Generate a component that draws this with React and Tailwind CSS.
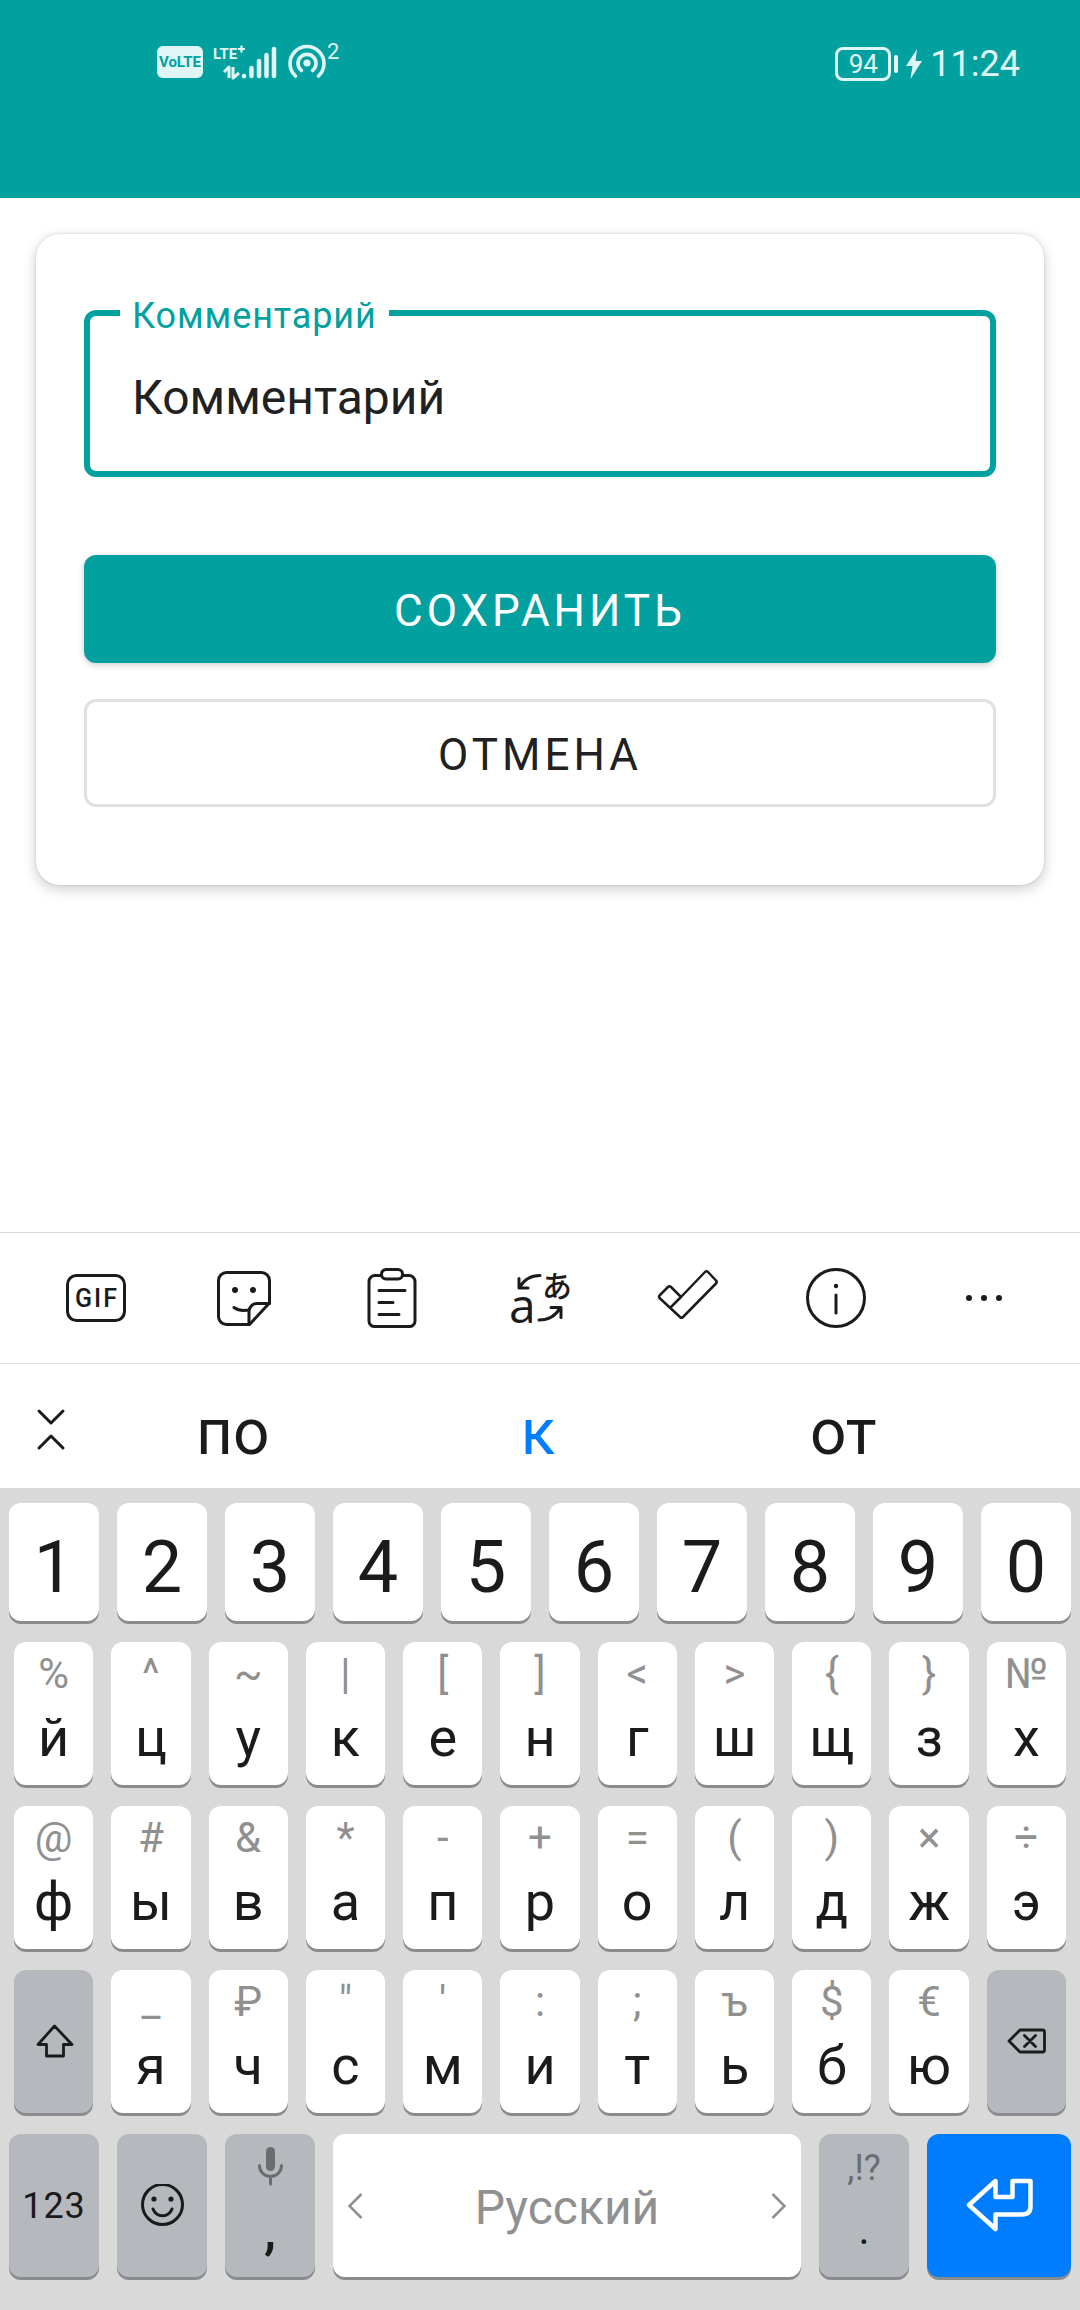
import React, { useState } from "react";

function StatusBar() {
  return (
    <header className="flex items-start justify-between bg-[#02a19f] pt-11 pr-[60px] pb-[114px] pl-[157px] text-[#e0f6f5]">
      <div className="flex h-10 items-start">
        <div className="mt-[2px] flex h-8 w-[46px] items-center justify-center rounded-md bg-[#e0f6f5] font-['Liberation_Sans_Narrow','Roboto',sans-serif] text-[15px] leading-none font-bold text-[#02a19f]">
          VoLTE
        </div>
        <svg className="ml-2 h-10 w-[68px]" viewBox="0 0 68 40" fill="none" aria-label="LTE+ signal">
          <text x="2" y="15" fill="currentColor" className="font-['Liberation_Sans_Narrow','Roboto',sans-serif] text-[15px] font-bold">LTE</text>
          <path d="M27 5h7M30.500 1.500v7" stroke="currentColor" strokeWidth="2.200" />
          <path d="M13 28l5-5v11M22 23v11l6-5" stroke="currentColor" strokeWidth="3" strokeLinejoin="round" />
          <path d="M33 32v.2M40.500 24v8M48 17v15M55.500 11v21M63 5v27" stroke="currentColor" strokeWidth="4.500" strokeLinecap="round" />
        </svg>
        <svg className="ml-2 h-10 w-10" viewBox="0 0 40 40" fill="none" stroke="currentColor" strokeWidth="3.600" strokeLinecap="round" aria-label="Hotspot">
          <circle cx="20" cy="19" r="3.600" fill="currentColor" stroke="none" />
          <path d="M14.500 26.500a9 9 0 1 1 11 0" />
          <path d="M8.500 32a17 17 0 1 1 23 0" />
        </svg>
        <span className="text-[22px] leading-4">2</span>
      </div>
      <div className="flex h-10 items-center">
        <div className="flex h-[34px] w-[56px] items-center justify-center rounded-lg border-[3px] border-[#e0f6f5] text-[26px] leading-none">94</div>
        <div className="ml-[3px] h-[18px] w-1 rounded-sm bg-[#e0f6f5]" />
        <svg className="ml-2 h-8 w-4" viewBox="0 0 16 32" fill="currentColor" aria-hidden="true">
          <path d="M11 1 0 18h6.500L4.500 31 16 13H9.500z" />
        </svg>
        <span className="ml-2 text-4xl leading-none">11:24</span>
      </div>
    </header>
  );
}

function CommentForm() {
  const [value, setValue] = useState("Комментарий");
  return (
    <form
      onSubmit={(e) => e.preventDefault()}
      className="mx-9 mt-9 flex flex-col rounded-3xl bg-white px-12 pt-[76px] pb-[78px] shadow-[0_4px_14px_rgba(0,0,0,0.2),0_0_3px_rgba(0,0,0,0.14)]"
    >
      <div className="relative">
        <label htmlFor="comment" className="absolute -top-4 left-9 bg-white px-3 text-4xl leading-[44px] tracking-wide text-[#02a19f]">
          Комментарий
        </label>
        <input
          id="comment"
          type="text"
          value={value}
          onChange={(e) => setValue(e.target.value)}
          className="h-[167px] w-full rounded-xl border-[6px] border-[#02a19f] bg-transparent px-[42px] pt-2 text-5xl text-[#212121] outline-none"
        />
      </div>
      <button type="submit" className="mt-[78px] h-[108px] rounded-xl bg-[#02a19f] pt-1 text-[44px] tracking-[4px] text-white shadow-[0_2px_6px_rgba(0,0,0,0.2)]">
        СОХРАНИТЬ
      </button>
      <button type="button" className="mt-9 h-[108px] rounded-xl border-[3px] border-[#e0e0e0] bg-white pt-1 text-[44px] tracking-[4px] text-[#212121]">
        ОТМЕНА
      </button>
    </form>
  );
}

const iconProps = {
  className: "size-[66px] overflow-visible",
  viewBox: "0 0 66 66",
  fill: "none",
  stroke: "currentColor",
  strokeWidth: 3,
  strokeLinecap: "round",
  strokeLinejoin: "round",
  "aria-hidden": true,
};

const tools = [
  {
    label: "GIF",
    icon: (
      <svg {...iconProps}>
        <rect x="4.500" y="10.500" width="57" height="45" rx="9" />
        <text x="34" y="42" textAnchor="middle" fill="currentColor" stroke="none" className="text-[25px] font-medium tracking-[2px]">GIF</text>
      </svg>
    ),
  },
  {
    label: "Стикеры",
    icon: (
      <svg {...iconProps}>
        <path d="M15.500 7.500h35a8 8 0 0 1 8 8V38L38.500 59.500h-23a8 8 0 0 1-8-8v-36a8 8 0 0 1 8-8Z" />
        <path d="M58.500 38.500H46a8 8 0 0 0-8 8v12.500M23 42.500c4 3 9 3.500 15 2.500" />
        <circle cx="24" cy="25" r="3" fill="currentColor" stroke="none" />
        <circle cx="42" cy="25" r="3" fill="currentColor" stroke="none" />
      </svg>
    ),
  },
  {
    label: "Буфер обмена",
    icon: (
      <svg {...iconProps}>
        <path d="M22 10.500h-6a6 6 0 0 0-6 6v39.500a5.500 5.500 0 0 0 6 5.500h34a5.500 5.500 0 0 0 6-5.500V16.500a6 6 0 0 0-6-6h-6" />
        <rect x="22.500" y="4.500" width="21" height="9.500" rx="4.500" />
        <path d="M20 25.500h26M20 37.500h14M20 49.500h20" />
      </svg>
    ),
  },
  {
    label: "Перевод",
    icon: (
      <svg {...iconProps}>
        <text x="2" y="58" fill="currentColor" stroke="none" className="font-['Open_Sans',sans-serif] text-[48px]">a</text>
        <text x="35" y="32" fill="currentColor" stroke="none" className="font-['Noto_Sans_CJK_JP',sans-serif] text-[30px] font-medium">あ</text>
        <path d="M33 10.500c-9 0-16 4-20.500 12M12 13.500v9.500h9M32 55c8 0 16-3 21-12M44 42.500h10v10" />
      </svg>
    ),
  },
  {
    label: "Проверка",
    icon: (
      <svg {...iconProps} strokeWidth="2.500">
        <path d="M4.500 30.500 13 22q1.500-1.500 3 0l10 10L50 7q1.500-1.500 3 0l8 8.500q1.500 1.500 0 3L28 52q-1.500 1.500-3 0L4.500 33q-1-1.200 0-2.500ZM26 32 15.500 42.500" />
      </svg>
    ),
  },
  {
    label: "Информация",
    icon: (
      <svg {...iconProps}>
        <circle cx="33" cy="33" r="28.500" />
        <path d="M33 30v18" />
        <circle cx="33" cy="21" r="2.200" fill="currentColor" stroke="none" />
      </svg>
    ),
  },
  {
    label: "Ещё",
    icon: (
      <svg {...iconProps} stroke="none" fill="currentColor">
        <circle cx="18" cy="33" r="3" />
        <circle cx="33" cy="33" r="3" />
        <circle cx="48" cy="33" r="3" />
      </svg>
    ),
  },
];

const numbers = ["1", "2", "3", "4", "5", "6", "7", "8", "9", "0"];

const rowOne = [["%", "й"], ["^", "ц"], ["~", "у"], ["|", "к"], ["[", "е"], ["]", "н"], ["<", "г"], [">", "ш"], ["{", "щ"], ["}", "з"], ["№", "х"]];
const rowTwo = [["@", "ф"], ["#", "ы"], ["&", "в"], ["*", "а"], ["-", "п"], ["+", "р"], ["=", "о"], ["(", "л"], [")", "д"], ["×", "ж"], ["÷", "э"]];
const rowThree = [["_", "я"], ["₽", "ч"], ['"', "с"], ["'", "м"], [":", "и"], [";", "т"], ["ъ", "ь"], ["$", "б"], ["€", "ю"]];

const keyBase = "rounded-xl shadow-[0_3px_0_#8a8b8f]";

function LetterKey({ symbol, letter }) {
  return (
    <button type="button" className={`${keyBase} flex h-[143px] flex-col items-center bg-white`}>
      <span className="text-[42px] leading-[64px] text-[#909090]">{symbol}</span>
      <span className="text-[54px] leading-[64px]">{letter}</span>
    </button>
  );
}

function GreyKey({ label, children }) {
  return (
    <button type="button" aria-label={label} className={`${keyBase} flex h-[143px] flex-col items-center justify-center bg-[#b5b8bd]`}>
      {children}
    </button>
  );
}

function Keyboard() {
  return (
    <section className="mt-auto text-[#1b1b1b]" aria-label="Клавиатура">
      <div className="grid grid-cols-7 border-y border-t-[#d9d9d9] border-b-[#e4e4e4] px-[22px] py-8">
        {tools.map((tool) => (
          <button key={tool.label} type="button" aria-label={tool.label} className="flex items-center justify-center">
            {tool.icon}
          </button>
        ))}
      </div>

      <div className="flex h-[124px] items-center pt-[6px] pr-[84px]">
        <button type="button" aria-label="Свернуть" className="flex w-20 justify-center pl-[22px]">
          <svg className="h-11 w-8" viewBox="0 0 32 44" fill="none" stroke="currentColor" strokeWidth="3" strokeLinecap="round" strokeLinejoin="round">
            <path d="m4 4 12 12L28 4M4 41l12-12 12 12" />
          </svg>
        </button>
        <div className="grid flex-1 grid-cols-3 text-[64px] leading-[84px]">
          <button type="button" className="pt-2">по</button>
          <button type="button" className="pt-2 text-[#007dff]">к</button>
          <button type="button" className="pt-2">от</button>
        </div>
      </div>

      <div className="flex flex-col gap-[21px] bg-[#d9d9d9] pt-[15px] pb-[33px]">
        <div className="grid grid-cols-10 gap-[18px] px-[9px]">
          {numbers.map((n) => (
            <button key={n} type="button" className={`${keyBase} h-[118px] bg-white pt-3 text-7xl leading-[106px]`}>
              {n}
            </button>
          ))}
        </div>
        <div className="grid grid-cols-11 gap-[18px] px-[14px]">
          {rowOne.map(([s, l]) => <LetterKey key={l} symbol={s} letter={l} />)}
        </div>
        <div className="grid grid-cols-11 gap-[18px] px-[14px]">
          {rowTwo.map(([s, l]) => <LetterKey key={l} symbol={s} letter={l} />)}
        </div>
        <div className="grid grid-cols-11 gap-[18px] px-[14px]">
          <GreyKey label="Shift">
            <svg className="h-9 w-10" viewBox="0 0 40 36" fill="none" stroke="currentColor" strokeWidth="2.800" strokeLinejoin="round">
              <path d="M20.500 2 4 20.500H12.500V32h17V20.500h8.500z" />
            </svg>
          </GreyKey>
          {rowThree.map(([s, l]) => <LetterKey key={l} symbol={s} letter={l} />)}
          <GreyKey label="Удалить">
            <svg className="h-7 w-10" viewBox="0 0 40 28" fill="none" stroke="currentColor" strokeWidth="2.800" strokeLinecap="round" strokeLinejoin="round">
              <path d="M14 2H36.500q2 0 2 2v18q0 2-2 2H14L3 13zM18.500 7.500l11 11M29.500 7.500l-11 11" />
            </svg>
          </GreyKey>
        </div>
        <div className="grid grid-cols-[5fr_5fr_5fr_26fr_5fr_8fr] gap-[18px] px-[9px]">
          <GreyKey>
            <span className="text-4xl tracking-wide">123</span>
          </GreyKey>
          <GreyKey label="Эмодзи">
            <svg className="size-11" viewBox="0 0 44 44" fill="none" stroke="currentColor" strokeWidth="3" strokeLinecap="round">
              <circle cx="22.500" cy="20.500" r="20" />
              <path d="M13 25c3.500 9 15.500 9 19 0" />
              <circle cx="14" cy="15" r="2.600" fill="currentColor" stroke="none" />
              <circle cx="31" cy="15" r="2.600" fill="currentColor" stroke="none" />
            </svg>
          </GreyKey>
          <GreyKey label="Запятая">
            <span className="flex h-16 items-center text-[#6b6c70]">
              <svg className="h-10 w-7" viewBox="0 0 28 40" fill="none" stroke="currentColor" strokeWidth="3" strokeLinecap="round">
                <rect x="10" y="1" width="9" height="24" rx="4.500" fill="currentColor" stroke="none" />
                <path d="M3.500 19.500c0 6 4.500 11 11 11s11-5 11-11M14.500 31v7" />
              </svg>
            </span>
            <span className="h-[79px] text-[54px] leading-[64px] font-medium">,</span>
          </GreyKey>
          <button type="button" className={`${keyBase} flex h-[143px] items-center justify-between bg-white px-[14px] text-5xl text-[#909090]`}>
            <svg className="h-7 w-4" viewBox="0 0 16 28" fill="none" stroke="currentColor" strokeWidth="2.500">
              <path d="M14.500 2 2.500 14l12 12" />
            </svg>
            <span className="pt-1">Русский</span>
            <svg className="h-7 w-4" viewBox="0 0 16 28" fill="none" stroke="currentColor" strokeWidth="2.500">
              <path d="m1.500 2 12 12-12 12" />
            </svg>
          </button>
          <GreyKey label="Точка">
            <span className="h-16 text-4xl leading-[68px] text-[#6b6c70]">,!?</span>
            <span className="h-[79px] text-[42px] leading-[64px]">.</span>
          </GreyKey>
          <button type="button" aria-label="Ввод" className={`${keyBase} flex h-[143px] items-center justify-center bg-[#007dff] text-white`}>
            <svg className="h-14 w-[70px]" viewBox="0 0 70 56" fill="none" stroke="currentColor" strokeWidth="4.500" strokeLinejoin="round">
              <path d="M31.500 3 5 27l26.500 24V36.500H58q8.500 0 8.500-8V3h-18v16h-17z" />
            </svg>
          </button>
        </div>
      </div>
    </section>
  );
}

export default function App() {
  return (
    <main className="flex min-h-screen flex-col bg-white font-['Roboto',sans-serif]">
      <StatusBar />
      <CommentForm />
      <Keyboard />
    </main>
  );
}
